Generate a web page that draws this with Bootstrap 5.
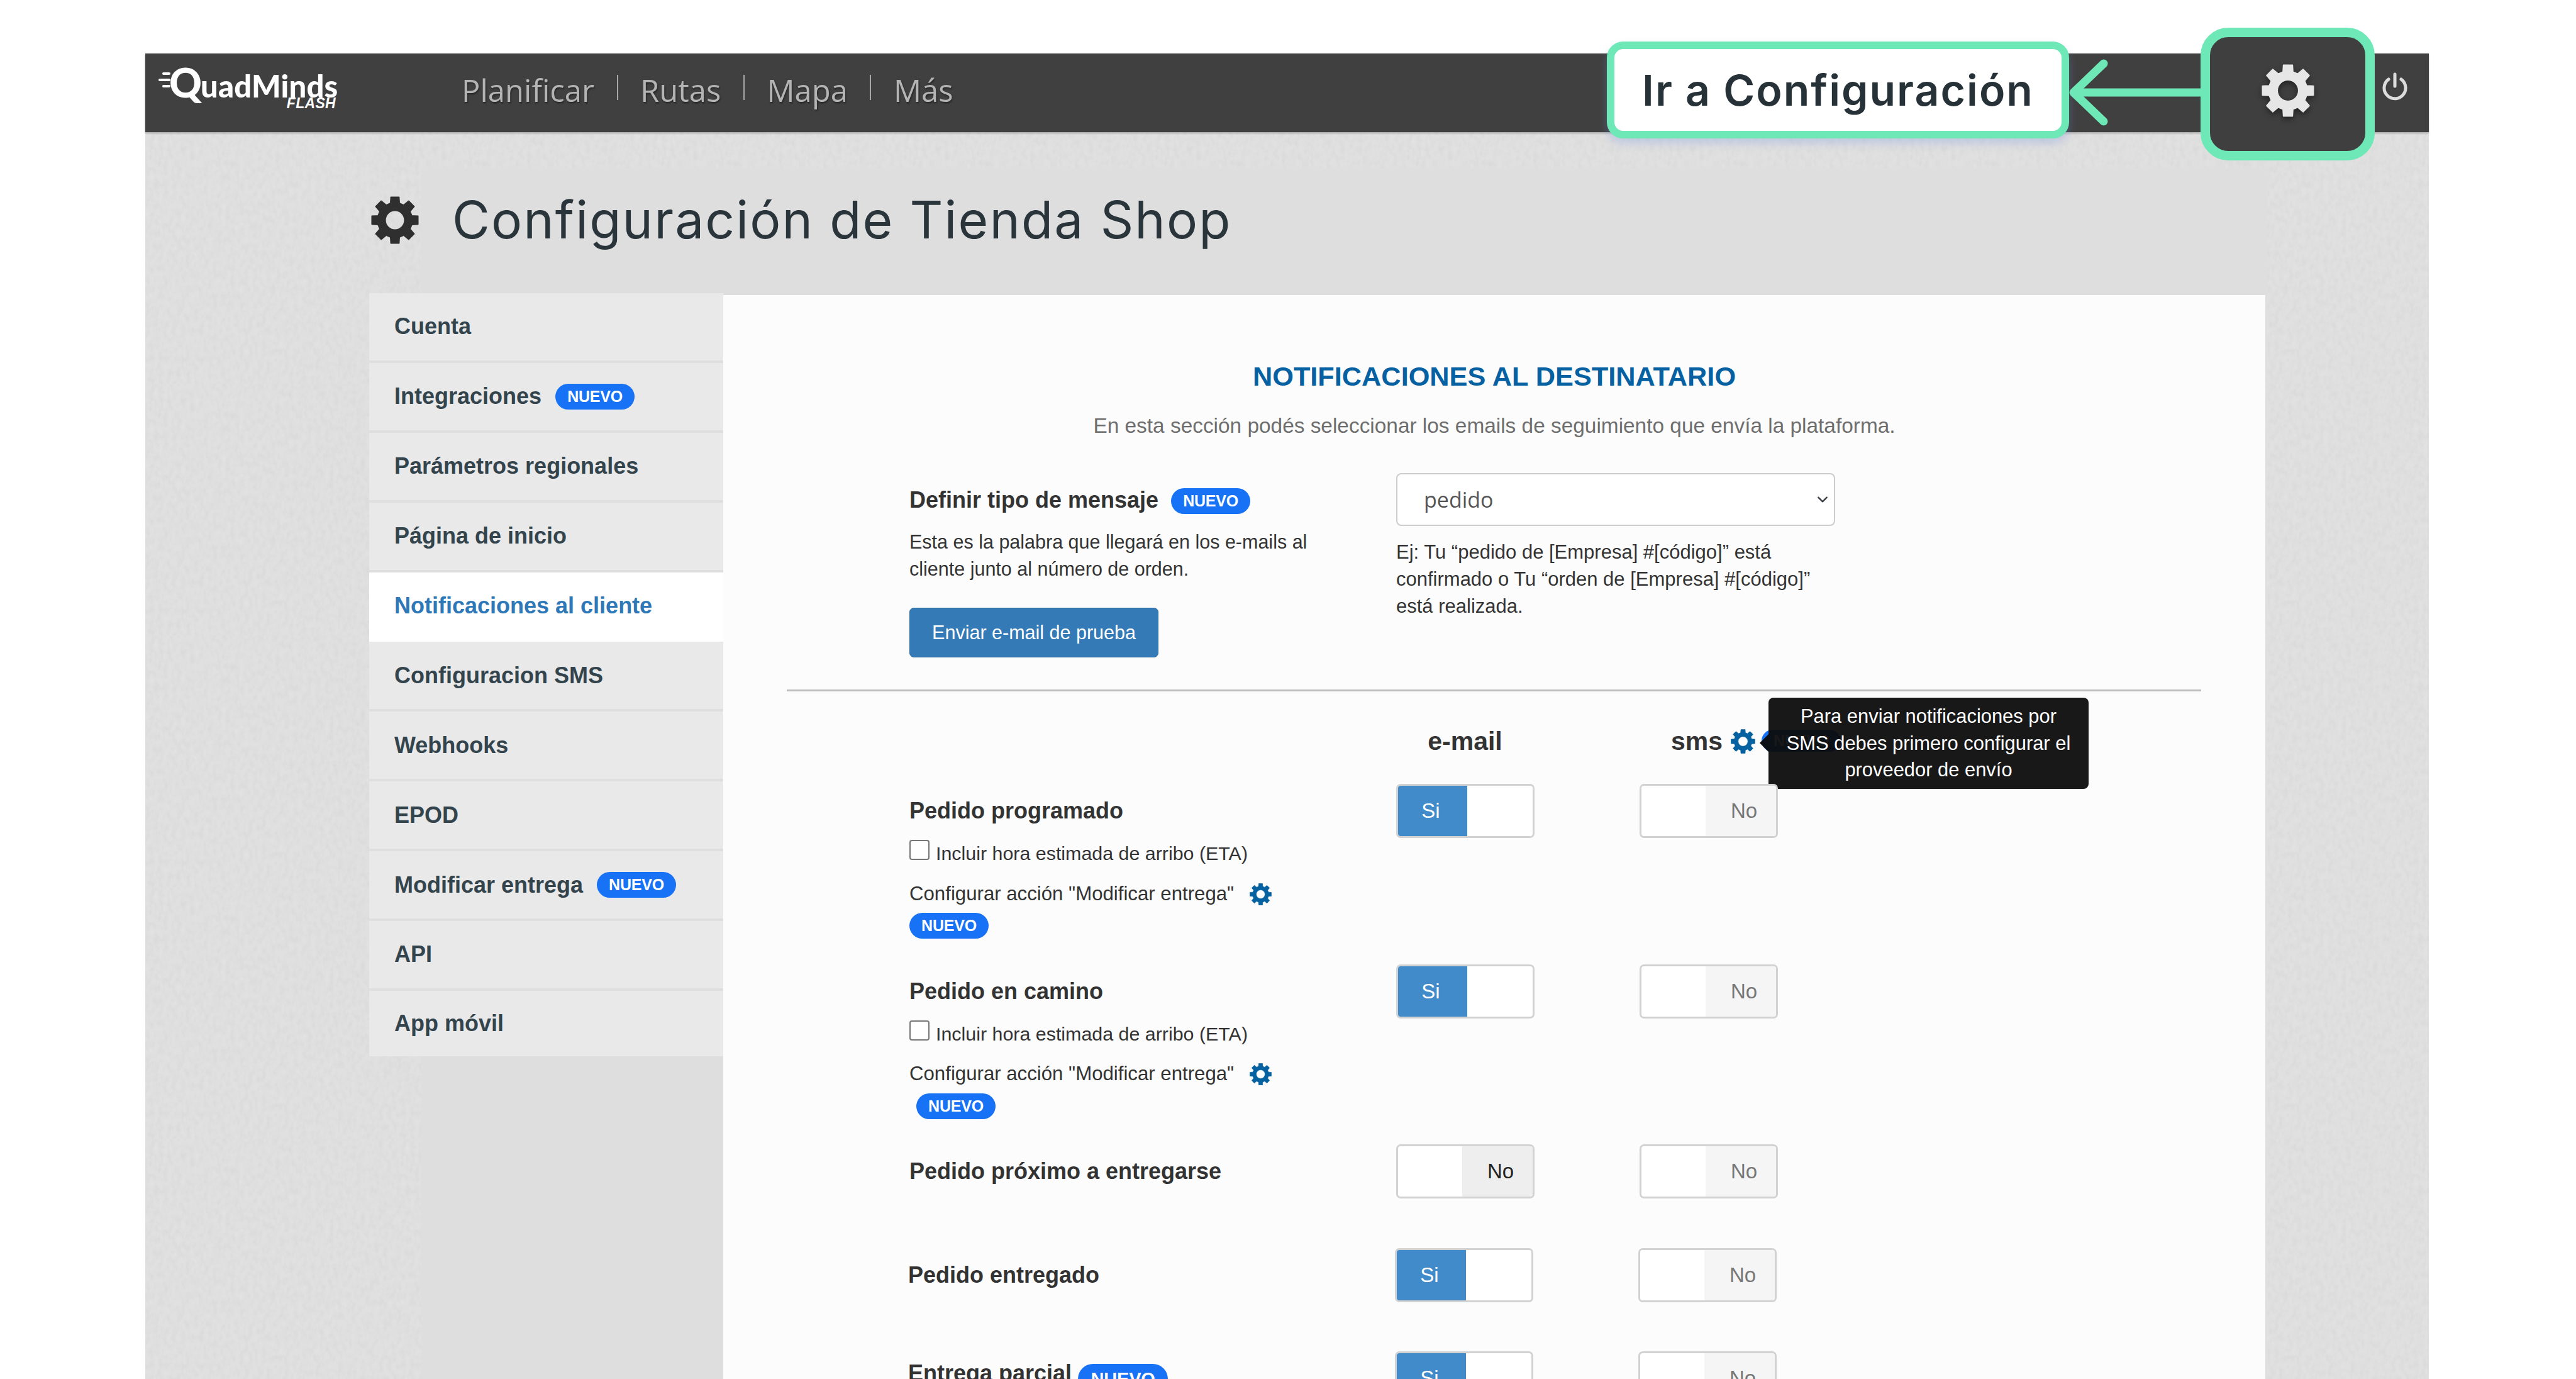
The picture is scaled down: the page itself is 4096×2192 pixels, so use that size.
<!doctype html>
<html lang="es">
<head>
<meta charset="utf-8">
<title>Configuración de Tienda Shop</title>
<link rel="stylesheet" href="https://cdn.jsdelivr.net/npm/bootstrap@5.3.0/dist/css/bootstrap.min.css">
<style>
html,body{height:2192px;overflow:hidden;background:#fff}
body{font-family:"Liberation Sans",Arial,sans-serif;color:#333;font-size:30.4px}
.app-frame{position:relative;margin:85px 234px 0 231px;height:2107px;overflow:visible}
.top-bar{height:125px;background:#404040;padding:0;align-items:flex-start;flex-wrap:nowrap;box-shadow:0 2px 3px rgba(0,0,0,.25);position:relative}
.brand{margin:14px 0 0 20px;width:286px;height:76px;color:#fff;position:relative;line-height:1;text-decoration:none}
.brand-main{display:flex;align-items:baseline;font-family:Lato,sans-serif;font-weight:900;white-space:nowrap}
.brand-q{font-size:64px;margin-left:18px;letter-spacing:-1px}
.brand-rest{font-size:49px;letter-spacing:.2px;margin-left:-1px}
.brand-flash{display:block;text-align:right;margin-top:-12px;font:italic 700 23px "Liberation Sans",sans-serif;padding-right:3px;letter-spacing:.3px}
.speed{position:absolute;left:0;top:16px;width:20px;display:flex;flex-direction:column;gap:6px;align-items:flex-end}
.speed i{display:block;height:4px;background:#fff;border-radius:2px}
.menu-list{margin:0 0 0 197px;padding:0;list-style:none;display:flex;align-items:center;gap:35.5px;height:116px;font:400 49px "Open Sans",sans-serif;color:#b4b4b4;text-shadow:1px 2px 3px rgba(0,0,0,.45)}
.menu-sep{width:2px;height:40px;background:#a8a8a8;margin-top:-8px}
.power-wrap{margin:30px 34px 0 auto;line-height:0}
.page-area{height:1982px;overflow:hidden;padding-left:356px;padding-right:260px;
background:linear-gradient(#dedede,#dedede) no-repeat 439px 57px/2935px 100%,
url("data:image/svg+xml,%3Csvg xmlns='http://www.w3.org/2000/svg' width='400' height='400'%3E%3Cfilter id='n'%3E%3CfeTurbulence type='fractalNoise' baseFrequency='.14 .09' numOctaves='3'/%3E%3CfeColorMatrix values='0 0 0 0 0 0 0 0 0 0 0 0 0 0 0 0 0 0 .05 0'/%3E%3C/filter%3E%3Crect width='400' height='400' filter='url(%23n)'/%3E%3C/svg%3E"),#e4e4e4}
.title-row{height:259px;padding:101px 0 0 3px;gap:53px;align-items:flex-start;color:#2f2f2f}
.title-text{font:400 82px/78px Inter,sans-serif;color:#29343b;margin:0;letter-spacing:2.1px;white-space:nowrap}
.work-row{align-items:flex-start;flex-wrap:nowrap}
.side-menu{width:563px;flex:none;margin-top:-3px;border-radius:0}
.side-menu .list-group-item{height:110.9px;background:#e9e9e9;border:0;border-bottom:4px solid #dfdfdf;border-radius:0;padding:0 0 0 40px;display:flex;align-items:center;gap:22px;font-weight:700;font-size:36px;color:#33444d}
.side-menu .list-group-item.on{background:#fff;color:#2f78b7;border-bottom-color:#fff}
.side-menu .list-group-item:last-child{border-bottom:0;height:104px}
.tag-new{display:inline-flex;align-items:center;justify-content:center;width:126px;height:41px;padding:0;background:#1772f6;color:#fff;font:700 25px "Liberation Sans",sans-serif;letter-spacing:-.2px}
.main-panel{flex:1;background:#fcfcfc;height:1730px;padding:0 0 0 101px}
.panel-h{margin:0 0 0 -101px;padding-top:105px;height:170px;text-align:center;font:700 43.3px/48px "Liberation Sans",sans-serif;color:#0661a3}
.panel-sub{margin:0 0 0 -101px;height:113px;padding-top:15px;text-align:center;font-size:33.4px;line-height:46px;color:#6e6e6e}
.top-form{display:grid;grid-template-columns:774px 698px;padding-left:195px;height:344px}
.lab{font-weight:700;font-size:36px;color:#333;height:86px;display:flex;align-items:center;gap:20px;align-self:start}
.lab .tag-new{margin-top:2px}
.help{line-height:43px;margin:2px 0 0;color:#333;font-size:30.5px}
.send-btn{margin-top:40px;width:396px;height:79px;padding:0;background:#337ab7;border:1px solid #2e6da4;color:#fff;font-size:30.5px;border-radius:7px}
.pick{height:84px;border:2px solid #ccc;border-radius:8px;padding:0 0 0 42px;font:400 34px "Open Sans",sans-serif;color:#555;background-size:24px 18px;background-position:right 6px center}
.pick-note{margin:20px 0 0;line-height:43px;color:#333;font-size:31px}
.rule{margin:0;border:0;border-top:3px solid #bbb;opacity:1;width:2249px}
.grid-row{display:grid;grid-template-columns:774px 387px 260px;padding-left:195px;position:relative}
.head-row{height:147px;font-weight:700;font-size:41px;line-height:48px;color:#333;padding-top:55px}
.head-row span.em{display:block;width:219px;text-align:center}
.sms-cell{position:relative;display:flex;align-items:center;gap:13px;padding-left:50px;height:48px}
.sms-tag{position:absolute;left:194px;top:6px;width:126px;height:35px}
.tip{position:absolute;left:205px;top:-45px;width:509px;height:145px;background:rgba(12,12,12,.95);border-radius:8px;color:#fff;font-size:30.9px;line-height:42.5px;text-align:center;font-weight:400;padding-top:9px}
.tip::before{content:"";position:absolute;left:-14px;top:57px;border:15px solid transparent;border-left:0;border-right-color:#0b0f16}
.detail-row{height:286.5px}
.short-row{height:164.5px}
.nudge{margin-left:-2px}
.toggle-box{width:220px;height:86px;border:3px solid #d2d2d2;border-radius:7px;display:flex;overflow:hidden;background:#fff;font-size:33px}
.toggle-box>div{flex:1;display:flex;align-items:center;justify-content:center}
.t-yes{background:#428bca;color:#fff;padding-right:6px}
.t-no{background:#f5f5f5;color:#777;padding-left:10px}
.t-no.act{background:#eee;color:#222}
.eta-line{display:flex;gap:10px;margin-top:3px;line-height:42px;height:43px}
.eta-line .chk{width:32px;height:32px;border:2px solid #767676;border-radius:4px;margin:0;flex:none;box-shadow:none;background-color:#fff}
.cfg-line{display:flex;align-items:center;gap:25px;height:42px;margin-top:22px;font-size:31.2px}
.cfg-tag{display:flex;margin-top:9px}
.shifted{margin-left:11px}
.lab-up{margin-top:-8px;gap:10px}
.lab-up .tag-new{width:143px;height:48px;font-size:29px;margin-top:18px}
.gear-blue{color:#05619f}
.call-box{position:absolute;left:2324px;top:-19px;width:735px;height:154px;background:#fff;border:12px solid #6de8b6;border-radius:26px;display:flex;align-items:center;justify-content:center;font:600 68px Inter,sans-serif;color:#263238;box-shadow:0 8px 14px rgba(120,150,225,.3);letter-spacing:2px}
.gear-box{position:absolute;left:3268px;top:-41px;width:277px;height:211px;background:#3f3f3f;border:15px solid #6de8b6;border-radius:44px;display:flex;align-items:center;justify-content:center;color:#e6e6e6}
.gear-box svg{filter:drop-shadow(0 4px 5px rgba(0,0,0,.45));margin-bottom:12px}
.call-arrow{position:absolute;left:3058px;top:8px}
</style>
</head>
<body>
<svg width="0" height="0" class="d-none" aria-hidden="true"><defs>
<symbol id="gear" viewBox="0 0 24 24"><path fill="currentColor" stroke="currentColor" stroke-width=".5" stroke-linejoin="round" fill-rule="evenodd" d="M9.72 3.5 9.92.4h4.16l.2 3.1L16.4 4.38 18.88 2.3 21.7 5.12 19.62 7.6 20.5 9.72 23.6 9.92v4.16l-3.1.2-.88 2.12 2.08 2.48-2.82 2.82-2.48-2.08-2.12.88-.2 3.1H9.92l-.2-3.1-2.12-.88-2.48 2.08-2.82-2.82L4.38 16.4 3.5 14.28.4 14.08V9.92l3.1-.2.88-2.12L2.3 5.12 5.12 2.3 7.6 4.38ZM12 7.2a4.8 4.8 0 1 0 0 9.6 4.8 4.8 0 1 0 0-9.6Z"/></symbol>
</defs></svg>

<div class="app-frame">
  <nav class="navbar top-bar">
    <a class="brand" href="#">
      <span class="speed"><i style="width:13px"></i><i style="width:19px"></i><i style="width:13px"></i></span>
      <span class="brand-main"><span class="brand-q">Q</span><span class="brand-rest">uadMinds</span></span>
      <span class="brand-flash">FLASH</span>
    </a>
    <ul class="menu-list">
      <li>Planificar</li><li class="menu-sep"></li><li>Rutas</li><li class="menu-sep"></li><li>Mapa</li><li class="menu-sep"></li><li>Más</li>
    </ul>
    <div class="power-wrap">
      <svg width="40" height="46" viewBox="0 0 40 46" fill="none" stroke="#dcdcdc" stroke-width="5" stroke-linecap="round"><path d="M20 3v19"/><path d="M10 11a17 17 0 1 0 20 0"/></svg>
    </div>
  </nav>

  <div class="call-box">Ir a Configuración</div>
  <svg class="call-arrow" width="212" height="110" viewBox="0 0 212 110" fill="none" stroke="#6de8b6" stroke-width="13" stroke-linecap="round" stroke-linejoin="round"><path d="M212 54H10"/><path d="M56 8 8 54l48 46" /></svg>
  <div class="gear-box"><svg width="84" height="84"><use href="#gear"/></svg></div>

  <div class="page-area">
    <div class="d-flex title-row">
      <svg width="76" height="78" class="flex-none"><use href="#gear"/></svg>
      <h1 class="title-text">Configuración de Tienda Shop</h1>
    </div>
    <div class="d-flex work-row">
      <div class="list-group side-menu">
        <a href="#" class="list-group-item">Cuenta</a>
        <a href="#" class="list-group-item">Integraciones <span class="badge rounded-pill tag-new">NUEVO</span></a>
        <a href="#" class="list-group-item">Parámetros regionales</a>
        <a href="#" class="list-group-item">Página de inicio</a>
        <a href="#" class="list-group-item on">Notificaciones al cliente</a>
        <a href="#" class="list-group-item">Configuracion SMS</a>
        <a href="#" class="list-group-item">Webhooks</a>
        <a href="#" class="list-group-item">EPOD</a>
        <a href="#" class="list-group-item">Modificar entrega <span class="badge rounded-pill tag-new">NUEVO</span></a>
        <a href="#" class="list-group-item">API</a>
        <a href="#" class="list-group-item">App móvil</a>
      </div>
      <main class="main-panel">
        <h2 class="panel-h">NOTIFICACIONES AL DESTINATARIO</h2>
        <p class="panel-sub">En esta sección podés seleccionar los emails de seguimiento que envía la plataforma.</p>
        <div class="top-form">
          <div>
            <div class="lab">Definir tipo de mensaje <span class="badge rounded-pill tag-new">NUEVO</span></div>
            <p class="help">Esta es la palabra que llegará en los e-mails al<br>cliente junto al número de orden.</p>
            <button type="button" class="btn send-btn">Enviar e-mail de prueba</button>
          </div>
          <div>
            <select class="form-select pick"><option>pedido</option></select>
            <p class="pick-note">Ej: Tu “pedido de [Empresa] #[código]” está<br>confirmado o Tu “orden de [Empresa] #[código]”<br>está realizada.</p>
          </div>
        </div>
        <hr class="rule">
        <div class="grid-row head-row">
          <span></span>
          <span class="em">e-mail</span>
          <div class="sms-cell">sms <span class="badge rounded-pill tag-new sms-tag">NUEVO</span><svg class="gear-blue position-relative" width="39" height="39"><use href="#gear"/></svg>
            <div class="tip">Para enviar notificaciones por<br>SMS debes primero configurar el<br>proveedor de envío</div>
          </div>
        </div>
        <div class="grid-row detail-row">
          <div>
            <div class="lab">Pedido programado</div>
            <div class="eta-line"><input class="form-check-input chk" type="checkbox"><span>Incluir hora estimada de arribo (ETA)</span></div>
            <div class="cfg-line">Configurar acción "Modificar entrega" <svg class="gear-blue" width="35" height="35"><use href="#gear"/></svg></div>
            <span class="badge rounded-pill tag-new cfg-tag">NUEVO</span>
          </div>
          <div class="toggle-box"><div class="t-yes">Si</div><div></div></div>
          <div class="toggle-box"><div></div><div class="t-no">No</div></div>
        </div>
        <div class="grid-row detail-row">
          <div>
            <div class="lab">Pedido en camino</div>
            <div class="eta-line"><input class="form-check-input chk" type="checkbox"><span>Incluir hora estimada de arribo (ETA)</span></div>
            <div class="cfg-line">Configurar acción "Modificar entrega" <svg class="gear-blue" width="35" height="35"><use href="#gear"/></svg></div>
            <span class="badge rounded-pill tag-new cfg-tag shifted">NUEVO</span>
          </div>
          <div class="toggle-box"><div class="t-yes">Si</div><div></div></div>
          <div class="toggle-box"><div></div><div class="t-no">No</div></div>
        </div>
        <div class="grid-row short-row">
          <div class="lab">Pedido próximo a entregarse</div>
          <div class="toggle-box"><div></div><div class="t-no act">No</div></div>
          <div class="toggle-box"><div></div><div class="t-no">No</div></div>
        </div>
        <div class="grid-row short-row nudge">
          <div class="lab">Pedido entregado</div>
          <div class="toggle-box"><div class="t-yes">Si</div><div></div></div>
          <div class="toggle-box"><div></div><div class="t-no">No</div></div>
        </div>
        <div class="grid-row short-row nudge">
          <div class="lab lab-up">Entrega parcial <span class="badge rounded-pill tag-new">NUEVO</span></div>
          <div class="toggle-box"><div class="t-yes">Si</div><div></div></div>
          <div class="toggle-box"><div></div><div class="t-no">No</div></div>
        </div>
      </main>
    </div>
  </div>
</div>
</body>
</html>
